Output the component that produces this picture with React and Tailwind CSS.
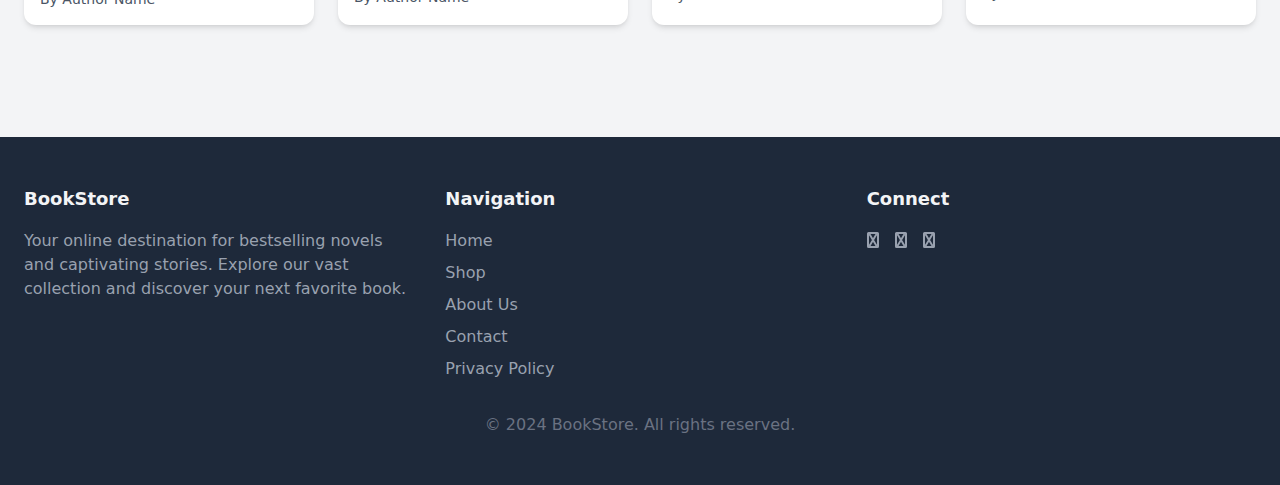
const cards = [
  { author: "By Author Name", pad: "pb-4" },
  { author: "By Author Name", pad: "pb-[18px]" },
  { author: "By Author Name", pad: "pb-5" },
  { author: "By Author Name", pad: "pb-[22px]" },
];

const links = ["Home", "Shop", "About Us", "Contact", "Privacy Policy"];
const socials = ["Facebook", "Twitter", "Instagram"];

function CrossedBox() {
  return (
    <svg viewBox="0 0 12 16" className="h-4 w-3" fill="none" stroke="currentColor" aria-hidden="true">
      <rect x="1" y="1" width="10" height="14" rx="0.5" strokeWidth="2" />
      <path d="M2.4 2L9.6 14M9.6 2L2.4 14" strokeWidth="1.9" />
    </svg>
  );
}

export default function App() {
  return (
    <div className="flex h-[485px] flex-col overflow-hidden bg-gray-100 font-['DejaVu_Sans',sans-serif]">
      <main className="grid h-[137px] shrink-0 grid-cols-4 items-start gap-6 px-6">
        {cards.map((card, i) => (
          <div
            key={i}
            className="flex h-[105px] -mt-20 flex-col justify-end rounded-xl bg-white shadow-md"
          >
            <p className={`px-4 text-sm text-gray-600 ${card.pad}`}>{card.author}</p>
          </div>
        ))}
      </main>
      <footer className="grow bg-[#1e293a] px-6 py-12 text-gray-100">
        <div className="grid grid-cols-3 gap-8">
          <div>
            <h3 className="mb-4 text-lg font-bold leading-7">BookStore</h3>
            <p className="text-gray-400">
              Your online destination for bestselling novels and captivating stories. Explore our vast
              collection and discover your next favorite book.
            </p>
          </div>
          <div>
            <h3 className="mb-4 text-lg font-bold leading-7">Navigation</h3>
            <ul className="space-y-2 text-gray-400">
              {links.map((link) => (
                <li key={link}>
                  <a href="#">{link}</a>
                </li>
              ))}
            </ul>
          </div>
          <div>
            <h3 className="mb-4 text-lg font-bold leading-7">Connect</h3>
            <div className="flex gap-4 pt-[3px] text-gray-400">
              {socials.map((name) => (
                <a key={name} href="#">
                  <CrossedBox />
                </a>
              ))}
            </div>
          </div>
        </div>
        <p className="mt-8 text-center text-gray-500">© 2024 BookStore. All rights reserved.</p>
      </footer>
    </div>
  );
}
